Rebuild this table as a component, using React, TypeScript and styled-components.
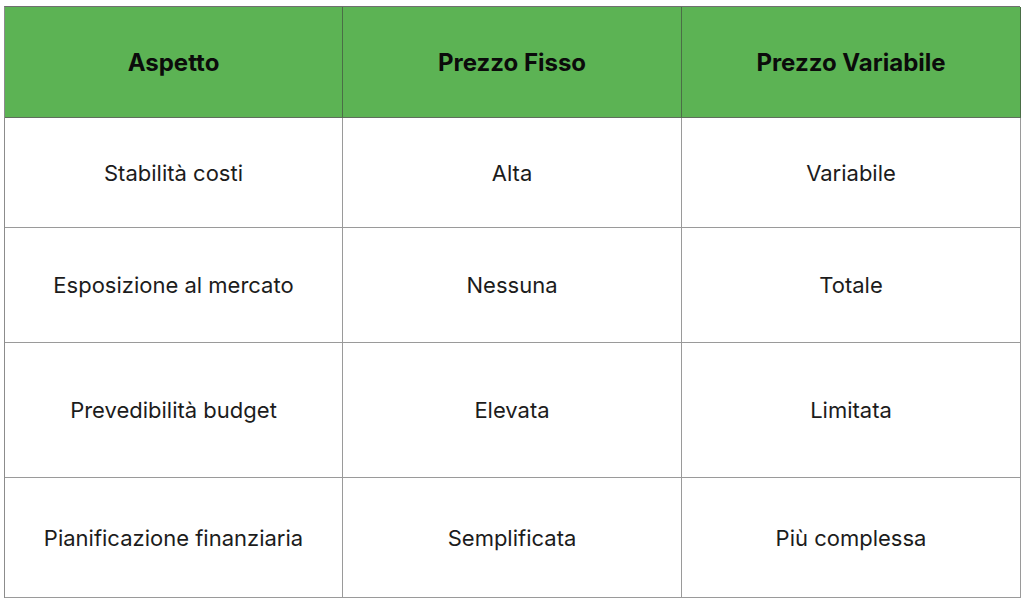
import React from 'react';
import styled, { createGlobalStyle } from 'styled-components';

const GlobalStyle = createGlobalStyle`
  body {
    margin: 0;
    background: #ffffff;
    font-family: Inter, "Open Sans", sans-serif;
  }
`;

const Page = styled.div`
  width: 1024px;
  height: 601px;
  padding: 6px 4px 0 4px;
  box-sizing: border-box;
`;

const Table = styled.div`
  display: grid;
  grid-template-columns: 338px 339px 339px;
  grid-template-rows: 111px 110px 115px 135px 120px;
  width: 1016px;
  border-left: 1px solid #8c8c8c;
  border-top: 1px solid #6f6f6f;
  box-sizing: border-box;
`;

const Cell = styled.div<{ $head?: boolean }>`
  display: flex;
  align-items: center;
  justify-content: center;
  text-align: center;
  border-right: 1px solid ${(p) => (p.$head ? '#4a6e46' : '#9a9a9a')};
  border-bottom: 1px solid ${(p) => (p.$head ? '#5f6f5d' : '#9a9a9a')};
  background: ${(p) => (p.$head ? '#5cb354' : '#ffffff')};
  color: ${(p) => (p.$head ? '#0b0b0b' : '#1c1c1c')};
  font-size: ${(p) => (p.$head ? '24px' : '22px')};
  font-weight: ${(p) => (p.$head ? 700 : 400)};
`;

const headers = ['Aspetto', 'Prezzo Fisso', 'Prezzo Variabile'];

const rows = [
  ['Stabilità costi', 'Alta', 'Variabile'],
  ['Esposizione al mercato', 'Nessuna', 'Totale'],
  ['Prevedibilità budget', 'Elevata', 'Limitata'],
  ['Pianificazione finanziaria', 'Semplificata', 'Più complessa'],
];

export default function App() {
  return (
    <Page>
      <GlobalStyle />
      <Table>
        {headers.map((h) => (
          <Cell key={h} $head>
            {h}
          </Cell>
        ))}
        {rows.map((r) =>
          r.map((c, i) => <Cell key={r[0] + i}>{c}</Cell>)
        )}
      </Table>
    </Page>
  );
}
